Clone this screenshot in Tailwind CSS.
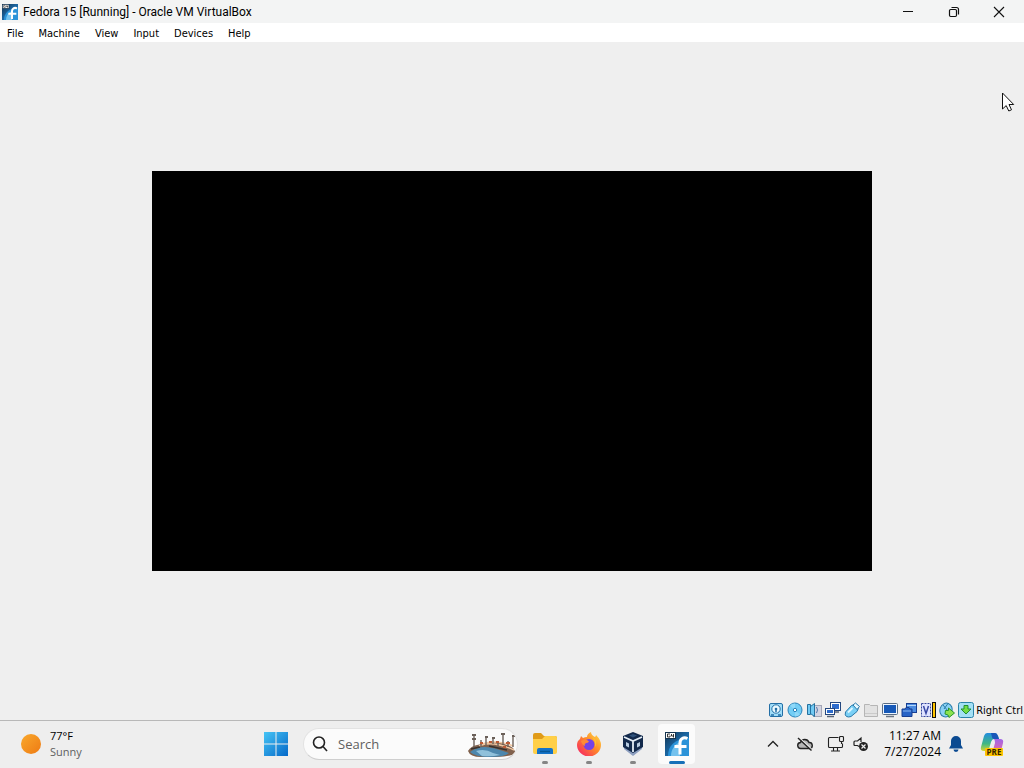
<!DOCTYPE html>
<html lang="en">
    <head>
        <meta charset="UTF-8">
        <meta name="viewport" content="width=device-width, initial-scale=1.0">
        <script src="https://cdn.jsdelivr.net/npm/@tailwindcss/browser@4"></script>
        <title>Fedora 15 [Running] - Oracle VM VirtualBox</title>
    </head>
    <body class="flex min-h-screen flex-col bg-[#efefef] font-['Open_Sans','Noto_Sans',sans-serif] text-black">
        <!-- Shared artwork -->
        <svg class="absolute size-0" aria-hidden="true">
            <defs>
                <linearGradient id="fedoraBg" x1="0" y1="0" x2="1" y2="1">
                    <stop offset="0" stop-color="#12304b"/>
                    <stop offset=".45" stop-color="#1a629c"/>
                    <stop offset="1" stop-color="#1c7fc4"/>
                </linearGradient>
                <symbol id="fedora" viewBox="0 0 24 24">
                    <rect width="24" height="24" fill="url(#fedoraBg)"/>
                    <path d="M3 24C3 14 9 7 24 6v18z" fill="#2b93d8"/>
                    <path d="M6 24c0-6 3-11 9-14v14z" fill="#74c2ee"/>
                    <path d="M22.500 6.500c-4-1.800-7.500.2-7.500 4.500v11.500M9.500 14.500H21.500" fill="none" stroke="#fff" stroke-width="3"/>
                    <rect x=".5" y=".5" width="10" height="6" fill="#fff" stroke="#16344f"/>
                    <path d="M5 2H2.500v3H5V3.500M6.500 2v2H9M8.500 2v3.500" fill="none" stroke="#222" stroke-width=".9"/>
                </symbol>
            </defs>
        </svg>

        <!-- Title bar -->
        <header class="flex h-[23px] items-center bg-[#f3f4f4]">
            <svg class="ml-[2px] size-4" aria-hidden="true"><use href="#fedora"/></svg>
            <h1 class="ml-[5px] flex-1 font-['Roboto','Open_Sans',sans-serif] text-[12px] leading-4 whitespace-nowrap">Fedora 15 [Running] - Oracle VM VirtualBox</h1>
            <div class="flex">
                <button type="button" aria-label="Minimize" class="flex h-[23px] w-[46px] items-center justify-center">
                    <svg class="size-3" viewBox="0 0 12 12" stroke="#111" aria-hidden="true"><path d="M1 5.500h10"/></svg>
                </button>
                <button type="button" aria-label="Restore" class="flex h-[23px] w-[45px] items-center justify-center">
                    <svg class="size-3" viewBox="0 0 12 12" fill="none" stroke="#111" stroke-width="1.200" aria-hidden="true"><rect x="1.500" y="3.500" width="7" height="7" rx="1.200"/><path d="M3.500 1.500h5a2 2 0 0 1 2 2v5"/></svg>
                </button>
                <button type="button" aria-label="Close" class="mr-[2px] flex h-[23px] w-[46px] items-center justify-center">
                    <svg class="size-3" viewBox="0 0 12 12" stroke="#111" stroke-width="1.100" aria-hidden="true"><path d="M1 1l10 10M11 1L1 11"/></svg>
                </button>
            </div>
        </header>

        <!-- Menu bar -->
        <nav class="flex h-[19px] items-center gap-[15px] bg-white pt-[2px] pl-[7px] font-['DejaVu_Sans_Condensed','DejaVu_Sans',sans-serif] text-[11px] leading-4">
            <button type="button">File</button>
            <button type="button">Machine</button>
            <button type="button">View</button>
            <button type="button">Input</button>
            <button type="button">Devices</button>
            <button type="button">Help</button>
        </nav>

        <!-- Guest screen -->
        <main class="relative flex flex-1 items-center justify-center">
            <div class="h-[400px] w-[720px] bg-black" role="img" aria-label="Guest display"></div>
            <svg class="absolute top-[50px] right-[9px] h-5 w-[14px]" viewBox="0 0 14 20" aria-hidden="true">
                <path d="M1.500 1v16l3.700-3.400 2.600 5.400 2.700-1.200-2.500-5.300h4.700z" fill="#fff" stroke="#111" stroke-linejoin="round"/>
            </svg>
        </main>

        <!-- VM status bar -->
        <div class="flex h-5 items-center justify-end gap-[2px] pr-px">
            <div class="flex gap-[3px]">
                <svg class="size-4" viewBox="0 0 16 16" aria-label="Hard disks" role="img">
                    <rect x="1.500" y="1.500" width="13" height="13" rx="1.500" fill="#9fdcf8" stroke="#236fa6"/>
                    <circle cx="8" cy="7" r="4.200" fill="#e9f9ff" stroke="#236fa6"/>
                    <circle cx="8" cy="7" r="1.300" fill="#236fa6"/>
                    <path d="M8 7v3M3 13h3M10 13h3" stroke="#236fa6" stroke-width="1.500"/>
                </svg>
                <svg class="size-4" viewBox="0 0 16 16" aria-label="Optical drives" role="img">
                    <circle cx="8" cy="8" r="7" fill="#73cdf5" stroke="#2a83b9"/>
                    <path d="M8 8L3 3.500A7 7 0 0 1 8 1.500zM8 8l5 4.500a7 7 0 0 1-5 2z" fill="#8fd8f8"/>
                    <circle cx="8" cy="8" r="1.700" fill="#fff" stroke="#2a83b9"/>
                </svg>
                <svg class="size-4" viewBox="0 0 16 16" aria-label="Audio" role="img">
                    <rect x="7.500" y="3.500" width="8" height="11" fill="#d3d4e2" stroke="#a4a6b6"/>
                    <path d="M1.500 2.500h3v10h-3zM4.500 4.500l4-3v13l-4-3z" fill="#72caf3" stroke="#26719f"/>
                    <path d="M10.500 5q2 3 0 6" fill="none" stroke="#5579a8"/>
                </svg>
                <svg class="size-4" viewBox="0 0 16 16" aria-label="Network" role="img">
                    <rect x="5.500" y=".5" width="10" height="8" fill="#fff" stroke="#24477e"/>
                    <path d="M7 2h7v5H7z" fill="#2d6ccd"/>
                    <path d="M10 10h4" stroke="#596577" stroke-width="1.500"/>
                    <rect x=".5" y="6.500" width="9" height="6" fill="#fff" stroke="#24477e"/>
                    <path d="M2 8h6v3H2z" fill="#2d6ccd"/>
                    <path d="M2 14.500h7" stroke="#596577" stroke-width="1.500"/>
                </svg>
                <svg class="size-4" viewBox="0 0 16 16" aria-label="USB" role="img">
                    <path d="M1.500 10l6-6.500q3-2 5.500.5t0 5.500l-6 5q-2.500 1-4.500 0T1.500 10z" fill="#79cff5" stroke="#2a79aa"/>
                    <path d="M9 3l2.500-2 4 3.500-2.500 3z" fill="#e6f8ff" stroke="#2a79aa"/>
                    <path d="M4 10.500l4.500-4.500" stroke="#dff6ff" stroke-width="1.800"/>
                </svg>
                <svg class="size-4" viewBox="0 0 16 16" aria-label="Shared folders" role="img">
                    <path d="M1.500 14.500v-12h5l1 1h7v11z" fill="#e2e2e2" stroke="#b5b5b5"/>
                    <path d="M2 11.500h12" stroke="#cacaca"/>
                </svg>
                <svg class="size-4" viewBox="0 0 16 16" aria-label="Display" role="img">
                    <rect x=".5" y="1.500" width="15" height="11" rx="1" fill="#eef6ff" stroke="#5a6c83"/>
                    <path d="M2 3h12v8H2z" fill="#1659b8"/>
                    <path d="M4 14.500h8" stroke="#6b7684" stroke-width="1.500"/>
                </svg>
                <svg class="size-4" viewBox="0 0 16 16" aria-label="Recording" role="img">
                    <rect x="5.500" y="1.500" width="10" height="9" fill="#4b8be0" stroke="#173e91"/>
                    <path d="M6 3.500h9" stroke="#b4d6fb"/>
                    <path d="M1 7h3l1-1.500h3L9 7h2v7.500H1z" fill="#2763c6" stroke="#173e91"/>
                    <path d="M2 9h8" stroke="#89b8f2"/>
                </svg>
                <svg class="size-4" viewBox="0 0 16 16" aria-label="Processor" role="img">
                    <rect x="1.500" y="1.500" width="9" height="13" fill="#dfe3ff" stroke="#33459c" stroke-dasharray="2 1"/>
                    <path d="M3.500 4l2.500 7.500L8.500 4" fill="none" stroke="#3748a4" stroke-width="1.500"/>
                    <path d="M12 0h4v16h-4z" fill="#111"/>
                    <path d="M13 1h2v14h-2z" fill="#ffc400"/>
                </svg>
                <svg class="size-4" viewBox="0 0 16 16" aria-label="Mouse integration" role="img">
                    <ellipse cx="7" cy="8" rx="6" ry="7" fill="#8bd2f4" stroke="#297baa" transform="rotate(20 7 8)"/>
                    <path d="M4 3l5 6M9 1.500L5 7" stroke="#297baa"/>
                    <path d="M6.500 8.500h3V6l6 5-5.500 4.500-1-2.500-3-1z" fill="#8be24e" stroke="#2b962d"/>
                </svg>
                <svg class="size-4" viewBox="0 0 16 16" aria-label="Keyboard capture" role="img">
                    <rect x=".5" y=".5" width="15" height="15" rx="2" fill="#a4e0f5" stroke="#2b83aa"/>
                    <path d="M6 3.500h4V7h3l-5 5-5-5h3z" fill="#72dd45" stroke="#218f32"/>
                </svg>
            </div>
            <span class="pt-px font-['DejaVu_Sans_Condensed','DejaVu_Sans',sans-serif] text-[11px] leading-4 whitespace-nowrap">Right Ctrl</span>
        </div>

        <!-- Taskbar -->
        <footer class="flex h-12 items-center border-t border-[#b8b8b8] bg-[#eeeeee] pb-[2px]">
            <button type="button" class="flex w-[254px] items-center gap-[9px] pl-[21px] text-left">
                <svg class="size-5" viewBox="0 0 20 20" aria-hidden="true">
                    <defs><linearGradient id="sun" x1="0" y1="0" x2="1" y2="1"><stop offset="0" stop-color="#f9a92d"/><stop offset="1" stop-color="#ee7a13"/></linearGradient></defs>
                    <circle cx="10" cy="10" r="10" fill="url(#sun)"/>
                </svg>
                <span class="flex flex-col text-[11px] leading-4">
                    <span>77°F</span>
                    <span class="text-[#606060]">Sunny</span>
                </span>
            </button>

            <div class="flex items-center">
                <button type="button" aria-label="Start" class="flex h-11 w-11 items-center justify-center">
                    <svg class="size-6" viewBox="0 0 24 24" aria-hidden="true">
                        <defs><linearGradient id="win" gradientUnits="userSpaceOnUse" x1="0" y1="0" x2="24" y2="24"><stop offset="0" stop-color="#45c4f5"/><stop offset="1" stop-color="#0568c8"/></linearGradient></defs>
                        <path d="M0 0h11.500v11.500H0zM12.500 0H24v11.500H12.500zM0 12.500h11.500V24H0zM12.500 12.500H24V24H12.500z" fill="url(#win)"/>
                    </svg>
                </button>
                <label class="mr-[5px] ml-[5px] flex h-8 w-[215px] items-center overflow-hidden rounded-full border border-[#e3e3e3] border-b-[#cfcfcf] bg-[#fbfbfb] pl-2">
                    <svg class="size-4 shrink-0" viewBox="0 0 16 16" fill="none" stroke="#222" stroke-width="1.600" aria-hidden="true"><circle cx="7" cy="6.500" r="5.500"/><path d="M11 10.500l4 4.500"/></svg>
                    <input type="search" aria-label="Search" placeholder="Search" class="ml-[10px] w-0 flex-1 bg-transparent text-[13px] leading-5 outline-none placeholder:text-[#606060]">
                    <svg class="h-[30px] w-[50px] shrink-0" viewBox="0 0 50 30" aria-hidden="true">
                        <path d="M1 22q3-5 9-6l14-3q13 0 22 6l3 5q-6 4-20 4H14Q3 28 1 22z" fill="#80614d"/>
                        <path d="M3 23q7-5 15-5t24 6q-4 4-19 4T3 23z" fill="#4d87ad"/>
                        <path d="M9 22q9-3 17 2l7 2q-9 2-18 1z" fill="#90c1db"/>
                        <path d="M12 17q13-6 35 4M15 15q15-5 31 2" fill="none" stroke="#f0c6a0" stroke-width="1.500"/>
                        <path d="M7 6v13M14 11v7M19 8v8M26 9v6M36 5v11M46 6v12M31 12v5M41 12v6" stroke="#6b6059" stroke-width="1.400"/>
                        <path d="M5 6h4M5 10h4M18 8h3M25 9h3M34 5h4M45 7h3" stroke="#6b6059" stroke-width="2"/>
                        <path d="M13 14h3M22 13h3M29 13h3M39 14h4M36 18h3" stroke="#bd5b35" stroke-width="2"/>
                        <path d="M4 20l9-2M22 17l18 4" stroke="#39322e" stroke-width="1.500"/>
                    </svg>
                </label>
                <button type="button" aria-label="File Explorer" class="relative flex h-11 w-11 items-center justify-center">
                    <svg class="size-6" viewBox="0 0 24 24" aria-hidden="true">
                        <path d="M0 3q0-2 2-2h6l3 3h11q2 0 2 2v4H0z" fill="#e09b18"/>
                        <path d="M0 7h9l3-3h10q2 0 2 2v14q0 2-2 2H2q-2 0-2-2z" fill="#ffcf47"/>
                        <path d="M4 22v-4q0-2 2-2h12q2 0 2 2v4z" fill="#1473c9"/>
                        <path d="M7 19.500h10" stroke="#075797" stroke-width="1.500"/>
                    </svg>
                    <span class="absolute bottom-[2px] h-[3px] w-[6px] rounded-full bg-[#858585]"></span>
                </button>
                <button type="button" aria-label="Firefox" class="relative flex h-11 w-11 items-center justify-center">
                    <svg class="size-6" viewBox="0 0 24 24" aria-hidden="true">
                        <defs><linearGradient id="fox" x1="1" y1="0" x2="0" y2="1"><stop offset="0" stop-color="#ffe34a"/><stop offset=".45" stop-color="#ff8a29"/><stop offset="1" stop-color="#f5156c"/></linearGradient></defs>
                        <path d="M4 4l2 2q2-1 4-1 0-3 4-5 0 3 4 5 1-1 1-2 5 5 5 10a11.500 11 0 0 1-24 0q0-4 3-6z" fill="url(#fox)"/>
                        <circle cx="12" cy="12.500" r="5.500" fill="#7542e5"/>
                        <path d="M4 9q3-2 6-1l2 1.500q-1 1.500-3 1.500-2 1-1 3-3-1-4-5z" fill="#ff8a35"/>
                        <path d="M14 4q5 4 4 11 3-5-1-9z" fill="#ffc32e"/>
                    </svg>
                    <span class="absolute bottom-[2px] h-[3px] w-[6px] rounded-full bg-[#858585]"></span>
                </button>
                <button type="button" aria-label="VirtualBox Manager" class="relative flex h-11 w-11 items-center justify-center">
                    <svg class="size-6" viewBox="0 0 24 24" aria-hidden="true">
                        <path d="M3 12h18v5l-9 7-9-7z" fill="#8d9fc0"/>
                        <path d="M12 0l10 4v11l-10 6-10-6V4z" fill="#12294b"/>
                        <path d="M3 5l9 4 9-4M12 9v11" fill="none" stroke="#e4edf6" stroke-width="1.800"/>
                        <path d="M5 10l3 1.500v4L5 14zM16 11.500l3-1.500v4l-3 1.500z" fill="#b7cbe0"/>
                        <path d="M8 3.500l4-1.500 4 1.500L12 5.500z" fill="#2f527b"/>
                    </svg>
                    <span class="absolute bottom-[2px] h-[3px] w-[6px] rounded-full bg-[#858585]"></span>
                </button>
                <button type="button" aria-label="Fedora 15" class="relative ml-[3px] flex h-10 w-[37px] items-center justify-center rounded bg-[#fbfbfb]">
                    <svg class="size-6" aria-hidden="true"><use href="#fedora"/></svg>
                    <span class="absolute bottom-0 h-[3px] w-4 rounded-full bg-[#1670b8]"></span>
                </button>
            </div>

            <div class="ml-auto flex items-center pr-5">
                <button type="button" aria-label="Show hidden icons" class="flex h-10 w-8 items-center justify-center">
                    <svg class="size-3" viewBox="0 0 12 12" fill="none" stroke="#222" stroke-width="1.300" aria-hidden="true"><path d="M1 8.500l5-5 5 5"/></svg>
                </button>
                <button type="button" aria-label="OneDrive" class="flex h-10 w-8 items-center justify-center">
                    <svg class="size-4" viewBox="0 0 16 16" aria-hidden="true">
                        <path d="M4 12.500a3 3 0 0 1-.5-6 4.500 4.500 0 0 1 8.500 0 3 3 0 0 1 .5 6z" fill="#b5b5b5" stroke="#222" stroke-width="1.400"/>
                        <path d="M1.500 1l13 12" stroke="#eee" stroke-width="1.200"/>
                        <path d="M1 2l13.500 12.500" stroke="#222" stroke-width="1.400"/>
                    </svg>
                </button>
                <button type="button" class="flex h-10 items-center gap-2 pl-[6px]" aria-label="Network and volume">
                    <svg class="h-4 w-[18px]" viewBox="0 0 18 16" fill="none" stroke="#222" stroke-width="1.100" aria-hidden="true">
                        <path d="M11.500 1.500h-9q-1 0-1 1v8q0 1 1 1h12q1 0 1-1V7.500M6.500 11.500v3M10.500 11.500v3M4 15h9M14.500 5v3"/>
                        <rect x="12.500" y=".5" width="4" height="5" rx="1"/>
                    </svg>
                    <svg class="h-4 w-4" viewBox="0 0 16 16" aria-hidden="true">
                        <path d="M6 10.500L4.500 9.500H2q-1 0-1-1V6q0-1 1-1h2.500L8 2v4" fill="none" stroke="#222" stroke-width="1.200"/>
                        <circle cx="10.500" cy="10.500" r="4.500" fill="#222"/>
                        <path d="M8.500 8.500l4 4M12.500 8.500l-4 4" stroke="#eee" stroke-width="1.200"/>
                    </svg>
                </button>
                <button type="button" class="ml-[15px] flex flex-col text-right text-[12px] leading-4 whitespace-nowrap">
                    <span>11:27 AM</span>
                    <span>7/27/2024</span>
                </button>
                <button type="button" aria-label="Notifications" class="ml-2 flex h-10 items-center">
                    <svg class="h-4 w-[14px]" viewBox="0 0 14 16" fill="#0b4a91" aria-hidden="true"><path d="M7 0a5 5 0 0 1 5 5v4l2 3.500H0L2 9V5a5 5 0 0 1 5-5zM4.500 13.500h5a2.500 2.500 0 0 1-5 0z"/></svg>
                </button>
                <button type="button" aria-label="Copilot preview" class="ml-[17px] flex h-10 items-center">
                    <svg class="size-6" viewBox="0 0 24 24" aria-hidden="true">
                        <defs>
                            <linearGradient id="copA" x1="0" y1="0" x2="0" y2="1"><stop offset="0" stop-color="#238de0"/><stop offset=".6" stop-color="#41b883"/><stop offset="1" stop-color="#d1d739"/></linearGradient>
                            <linearGradient id="copB" x1="0" y1="0" x2="0" y2="1"><stop offset="0" stop-color="#a066e8"/><stop offset="1" stop-color="#f16b9c"/></linearGradient>
                        </defs>
                        <path d="M7 1h8q2 0 3 3l1 3h-5q-2 0-3 3l-2 7q-1 2-3 2H4q-4 0-3-4L4 4q1-3 3-3z" fill="url(#copA)"/>
                        <path d="M11 1h4q2 0 3 3l1 3h-5q-2 0-2-2z" fill="#1957b8"/>
                        <path d="M14 7h6q4 0 3 4l-2 8q-1 3-4 3H9q3 0 4-4l2-7q0-3-1-4z" fill="url(#copB)"/>
                        <rect x="5" y="16" width="18" height="8" rx="1" fill="#ffc400"/>
                        <text x="14" y="23" text-anchor="middle" font-family="Open Sans, sans-serif" font-size="8" font-weight="700" fill="#332500">PRE</text>
                    </svg>
                </button>
            </div>
        </footer>
    </body>
</html>
